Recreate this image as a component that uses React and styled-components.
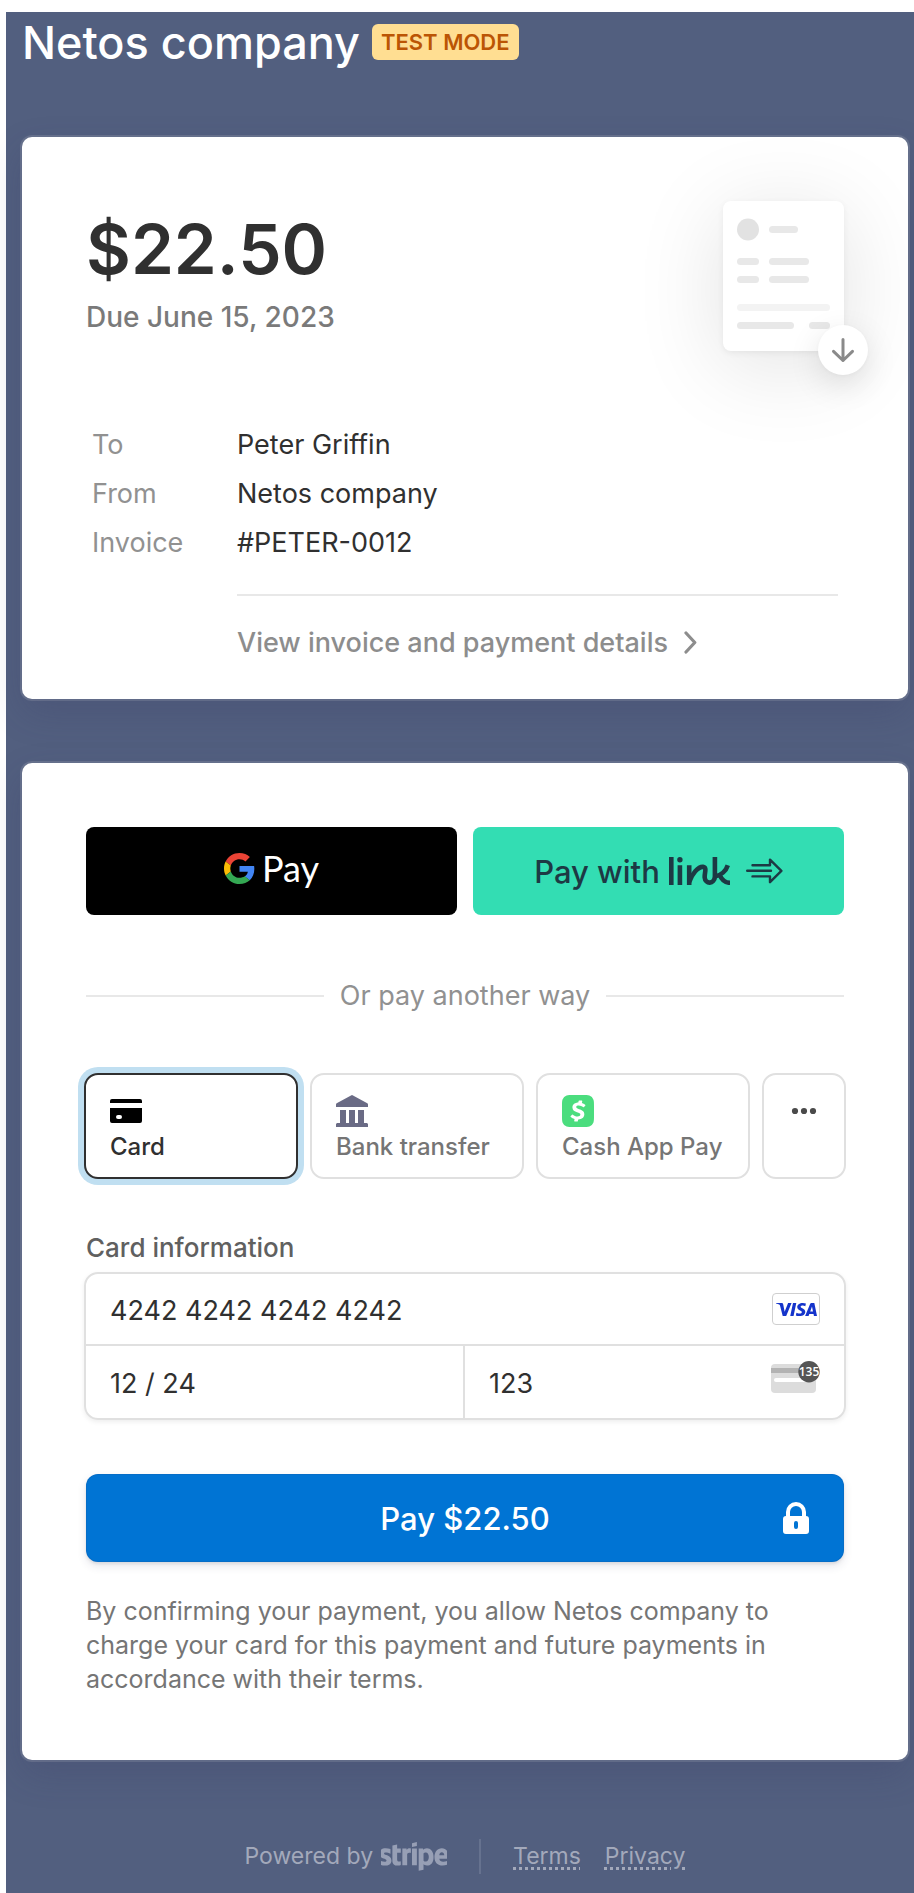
import React, { useState } from "react";
import styled, { createGlobalStyle } from "styled-components";
import { FaStripe } from "react-icons/fa";
import { SiVisa, SiCashapp } from "react-icons/si";

const GlobalStyle = createGlobalStyle`
  *, *::before, *::after { box-sizing: border-box; }
  body {
    margin: 0;
    background: #fff;
    font-family: Inter, "Liberation Sans", sans-serif;
    -webkit-font-smoothing: antialiased;
  }
  button, input { font-family: inherit; }
`;

const Frame = styled.div`
  padding: 12px 0 0 6px;
`;

const Page = styled.main`
  display: flex;
  flex-direction: column;
  min-height: calc(100vh - 12px);
  padding: 4px 6px 18px 16px;
  background: #525f7f;
`;

const Header = styled.header`
  display: flex;
  align-items: flex-start;
  gap: 12px;
  margin-bottom: 67px;
`;

const Company = styled.h1`
  margin: 0;
  color: #fff;
  font-size: 45px;
  line-height: 54px;
  font-weight: 500;
`;

const Badge = styled.span`
  margin-top: 8px;
  padding: 0 9px;
  border-radius: 6px;
  background: #ffde92;
  color: #bb5504;
  font-size: 22px;
  line-height: 36px;
  font-weight: 600;
`;

const Panel = styled.section`
  padding: 64px 64px ${(p) => p.$bottom}px;
  border-radius: 10px;
  background: #fff;
  box-shadow: 0 0 0 2px rgba(224, 224, 224, 0.15), 0 14px 36px rgba(50, 50, 93, 0.2);
  & + & { margin-top: 64px; }
`;

const Summary = styled.div`
  display: flex;
  justify-content: space-between;
  align-items: flex-start;
`;

const Amount = styled.h2`
  margin: 0;
  color: #303030;
  font-size: 69px;
  line-height: 96px;
  font-weight: 600;
`;

const Due = styled.p`
  margin: 0;
  color: #7a7a7a;
  font-size: 28px;
  line-height: 40px;
  font-weight: 500;
`;

const Download = styled.button`
  position: relative;
  display: block;
  width: 121px;
  height: 150px;
  padding: 0;
  border: 0;
  border-radius: 8px;
  background: #fff;
  box-shadow: 0 14px 90px rgba(0, 0, 0, 0.12), 0 2px 6px rgba(0, 0, 0, 0.06);
  cursor: pointer;
  svg { display: block; }
`;

const DownloadBadge = styled.span`
  position: absolute;
  right: -24px;
  bottom: -24px;
  display: flex;
  align-items: center;
  justify-content: center;
  width: 50px;
  height: 50px;
  border-radius: 50%;
  background: #fff;
  box-shadow: 0 10px 32px rgba(0, 0, 0, 0.12), 0 1px 4px rgba(0, 0, 0, 0.03);
`;

const Facts = styled.dl`
  display: grid;
  grid-template-columns: 145px 1fr;
  row-gap: 16px;
  margin: 77px 6px 0;
  font-size: 27px;
  line-height: 33px;
`;

const FactLabel = styled.dt`
  color: #919191;
`;

const FactValue = styled.dd`
  margin: 0;
  color: #303030;
`;

const Details = styled.div`
  margin: 35px 6px 0 151px;
  padding-top: 30px;
  border-top: 2px solid #e8e8e8;
`;

const DetailsLink = styled.a`
  display: flex;
  align-items: center;
  gap: 16px;
  color: #8d8d8d;
  font-size: 27px;
  line-height: 33px;
  font-weight: 500;
  text-decoration: none;
`;

const Wallets = styled.div`
  display: grid;
  grid-template-columns: 1fr 1fr;
  gap: 16px;
`;

const WalletButton = styled.button`
  display: flex;
  align-items: center;
  justify-content: center;
  gap: 9px;
  height: 88px;
  padding: 0;
  border: 0;
  border-radius: 8px;
  background: #33ddb3;
  color: #1d3944;
  font-size: 31px;
  font-weight: 500;
  cursor: pointer;
`;

const GoogleButton = styled(WalletButton)`
  gap: 7px;
  padding-bottom: 6px;
  background: #000;
  color: #fff;
  font-family: Lato, sans-serif;
  font-size: 36px;
  font-weight: 400;
`;

const Divider = styled.div`
  display: flex;
  align-items: center;
  gap: 16px;
  margin: 60px 0 56px;
  color: #919191;
  font-size: 27px;
  line-height: 42px;
  &::before, &::after {
    content: "";
    flex: 1;
    height: 2px;
    background: #e8e8e8;
  }
`;

const Methods = styled.div`
  display: grid;
  grid-template-columns: 1fr 1fr 1fr 84px;
  gap: 12px;
  margin: 0 -2px 52px;
`;

const Method = styled.button`
  display: flex;
  flex-direction: column;
  align-items: ${(p) => (p.$centered ? "center" : "flex-start")};
  gap: 5px;
  height: 106px;
  padding: 20px ${(p) => (p.$centered ? 0 : 24)}px 0;
  border: 2px solid ${(p) => (p.$active ? "#303030" : "#e0e0e0")};
  border-radius: 14px;
  background: #fff;
  box-shadow: ${(p) => (p.$active ? "0 0 0 6px #c0dff1" : "none")};
  color: ${(p) => (p.$active ? "#303030" : "#757575")};
  font-size: 24px;
  line-height: 30px;
  font-weight: 500;
  white-space: nowrap;
  cursor: pointer;
  svg { display: block; flex: none; }
`;

const FieldLabel = styled.label`
  display: block;
  margin-bottom: 7px;
  color: #606060;
  font-size: 26px;
  line-height: 34px;
  font-weight: 500;
`;

const CardFields = styled.div`
  display: grid;
  grid-template-columns: minmax(0, 99fr) minmax(0, 100fr);
  margin: 0 -2px 54px;
  border: 2px solid #e0e0e0;
  border-radius: 14px;
  box-shadow: 0 2px 5px rgba(0, 0, 0, 0.07);
`;

const Field = styled.div`
  display: flex;
  align-items: center;
  height: 72px;
  padding: 0 24px;
  svg { flex: none; }
`;

const NumberField = styled(Field)`
  grid-column: 1 / -1;
  border-bottom: 2px solid #e0e0e0;
`;

const CvcField = styled(Field)`
  border-left: 2px solid #e0e0e0;
`;

const Input = styled.input`
  flex: 1;
  min-width: 0;
  height: 100%;
  padding: 2px 0 0;
  border: 0;
  outline: 0;
  background: transparent;
  color: #303030;
  font-size: 27px;
`;

const VisaBadge = styled.span`
  display: flex;
  align-items: center;
  justify-content: center;
  width: 48px;
  height: 32px;
  border: 1px solid #cfcfcf;
  border-radius: 4px;
  color: #1434cb;
`;

const PayButton = styled.button`
  display: grid;
  grid-template-columns: 26px 1fr 26px;
  align-items: center;
  width: 100%;
  height: 88px;
  padding: 0 35px;
  border: 0;
  border-radius: 12px;
  background: #0074d4;
  box-shadow: inset 0 0 0 1px rgba(50, 50, 93, 0.1), 0 4px 10px rgba(50, 50, 93, 0.12), 0 2px 3px rgba(0, 0, 0, 0.08);
  color: #fff;
  font-size: 31px;
  font-weight: 500;
  cursor: pointer;
  span { grid-column: 2; }
`;

const Terms = styled.p`
  margin: 32px 0 0;
  color: #757575;
  font-size: 25px;
  line-height: 34px;
`;

const Footer = styled.footer`
  display: flex;
  align-items: center;
  justify-content: center;
  gap: 32px;
  margin-top: 78px;
  color: #a3a9bb;
  font-size: 23px;
  line-height: 37px;
`;

const Powered = styled.div`
  display: flex;
  align-items: center;
  gap: 8px;
  svg { display: block; width: 66px; height: 35px; color: #979fb5; }
`;

const FooterRule = styled.span`
  width: 2px;
  height: 35px;
  background: #66728f;
`;

const FooterLinks = styled.nav`
  display: flex;
  gap: 24px;
`;

const FooterLink = styled.a`
  color: inherit;
  text-decoration: underline dotted;
  text-decoration-thickness: 3px;
  text-underline-offset: 3px;
`;

const InvoiceSheet = () => (
  <svg width="121" height="150" viewBox="0 0 121 150" aria-hidden="true">
    <circle cx="25" cy="28.5" r="11" fill="#e2e2e2" />
    <g fill="#e8e8e8">
      <rect x="46" y="25" width="29" height="7" rx="3.5" />
      <rect x="14" y="57" width="22" height="7" rx="3.5" />
      <rect x="46" y="57" width="40" height="7" rx="3.5" />
      <rect x="14" y="75" width="22" height="7" rx="3.5" />
      <rect x="46" y="75" width="40" height="7" rx="3.5" />
      <rect x="14" y="121" width="57" height="7" rx="3.5" />
      <rect x="86" y="121" width="21" height="7" rx="3.5" />
    </g>
    <rect x="14" y="103" width="93" height="7" rx="3.5" fill="#f3f3f3" />
  </svg>
);

const ArrowDown = () => (
  <svg width="24" height="26" viewBox="0 0 24 26" fill="none" stroke="#8a8a8a" strokeWidth="3" strokeLinecap="round" strokeLinejoin="round" aria-hidden="true">
    <path d="M12 2.5V23.5M2.5 14.3L12 23.5L21.5 14.3" />
  </svg>
);

const Chevron = () => (
  <svg width="13" height="23" viewBox="0 0 13 23" fill="none" stroke="currentColor" strokeWidth="3.2" strokeLinecap="round" strokeLinejoin="round" aria-hidden="true">
    <path d="M2 2L10.8 11.5L2 21" />
  </svg>
);

const GoogleMark = () => (
  <svg width="31" height="31" viewBox="0 0 48 48" aria-hidden="true">
    <path fill="#EA4335" d="M24 9.5c3.54 0 6.71 1.22 9.21 3.6l6.85-6.85C35.9 2.38 30.47 0 24 0 14.62 0 6.51 5.38 2.56 13.22l7.98 6.19C12.43 13.72 17.74 9.5 24 9.5z" />
    <path fill="#4285F4" d="M46.98 24.55c0-1.57-.15-3.09-.38-4.55H24v9.02h12.94c-.58 2.96-2.26 5.48-4.78 7.18l7.73 6c4.51-4.18 7.09-10.36 7.09-17.65z" />
    <path fill="#FBBC05" d="M10.53 28.59c-.48-1.45-.76-2.99-.76-4.59s.27-3.14.76-4.59l-7.98-6.19C.92 16.46 0 20.12 0 24c0 3.88.92 7.54 2.56 10.78l7.97-6.19z" />
    <path fill="#34A853" d="M24 48c6.48 0 11.93-2.13 15.89-5.81l-7.73-6c-2.15 1.45-4.92 2.3-8.16 2.3-6.26 0-11.57-4.22-13.47-9.91l-7.98 6.19C6.51 42.62 14.62 48 24 48z" />
  </svg>
);

const LinkLogo = () => (
  <svg width="62" height="28" viewBox="0 0 62 28" fill="none" stroke="currentColor" strokeWidth="4.6" role="img" aria-label="link">
    <path d="M2.3 0V28M10.9 8.3V28M20.2 8.3V28" />
    <circle cx="10.9" cy="2.7" r="2.7" fill="currentColor" stroke="none" />
    <path d="M20.2 25C23 17 29 9.6 34 9.9C38.4 10.4 35.3 16 35.7 20.5C36.2 27.4 45.4 27.6 45.9 19.5V0" />
    <path d="M58.8 8.3C57 14 52 18.4 46 19.4M50.5 17.6C52.6 22.5 55.5 25.8 61 25.8" />
  </svg>
);

const LinkArrow = () => (
  <svg width="43" height="26" viewBox="-6 0 43 26" fill="none" stroke="currentColor" strokeWidth="2.4" strokeLinecap="round" strokeLinejoin="round" aria-hidden="true">
    <path d="M1.2 12.8H25M6.5 7.3H24V1.6L35.4 12.8L24 24.2V18.4H6.5" />
  </svg>
);

const CardIcon = () => (
  <svg width="32" height="32" viewBox="0 0 32 32" aria-hidden="true">
    <path d="M2 4H30A2 2 0 0 1 32 6V8H0V6A2 2 0 0 1 2 4Z" />
    <path fillRule="evenodd" d="M0 13H32V26A2 2 0 0 1 30 28H2A2 2 0 0 1 0 26ZM8 20A2 2 0 0 0 8 24H10A2 2 0 0 0 10 20Z" />
  </svg>
);

const BankIcon = () => (
  <svg width="32" height="32" viewBox="0 0 32 32" fill="#6a6b85" aria-hidden="true">
    <path d="M15 .4Q16-.3 17 .4L31.3 8.3Q32 8.7 32 9.5V12H0V9.5Q0 8.7.7 8.3Z" />
    <path d="M4 15H10V28H13V15H19V28H22V15H28V28H31L32 29V32H0V29L1 28H4Z" />
  </svg>
);

const DotsIcon = () => (
  <svg width="32" height="32" viewBox="0 0 32 32" fill="#4a4a4a" aria-hidden="true">
    <circle cx="7" cy="16" r="3.1" />
    <circle cx="16" cy="16" r="3.1" />
    <circle cx="25" cy="16" r="3.1" />
  </svg>
);

const CvcIcon = () => (
  <svg width="49" height="42" viewBox="0 0 49 42" aria-hidden="true">
    <rect x="0" y="3" width="45" height="29" rx="4" fill="#dcdcdc" />
    <rect x="0" y="7" width="45" height="5" fill="#b3b3b3" />
    <rect x="3" y="17" width="38" height="4" rx="2" fill="#fff" />
    <circle cx="38" cy="10.7" r="10.7" fill="#555" />
    <text x="38" y="15" fill="#fff" fontFamily="Open Sans, sans-serif" fontSize="12" fontWeight="600" textAnchor="middle">135</text>
  </svg>
);

const LockIcon = () => (
  <svg width="26" height="32" viewBox="0 0 26 32" aria-hidden="true">
    <path d="M5 15V10A8 8 0 0 1 21 10V15" fill="none" stroke="#fff" strokeWidth="4" />
    <path fill="#fff" fillRule="evenodd" d="M3 14H23A3 3 0 0 1 26 17V29A3 3 0 0 1 23 32H3A3 3 0 0 1 0 29V17A3 3 0 0 1 3 14ZM13 19A2 2 0 0 0 11 21V25A2 2 0 0 0 15 25V21A2 2 0 0 0 13 19Z" />
  </svg>
);

const facts = [
  ["To", "Peter Griffin"],
  ["From", "Netos company"],
  ["Invoice", "#PETER-0012"],
];

const methods = [
  { id: "card", label: "Card", icon: <CardIcon /> },
  { id: "bank", label: "Bank transfer", icon: <BankIcon /> },
  { id: "cashapp", label: "Cash App Pay", icon: <SiCashapp size={32} color="#4bdd7e" aria-hidden="true" /> },
];

export default function App() {
  const [method, setMethod] = useState("card");

  return (
    <>
      <GlobalStyle />
      <Frame>
        <Page>
          <Header>
            <Company>Netos company</Company>
            <Badge>TEST MODE</Badge>
          </Header>

          <Panel $bottom={40}>
            <Summary>
              <div>
                <Amount>$22.50</Amount>
                <Due>Due June 15, 2023</Due>
              </div>
              <Download type="button" aria-label="Download invoice">
                <InvoiceSheet />
                <DownloadBadge>
                  <ArrowDown />
                </DownloadBadge>
              </Download>
            </Summary>
            <Facts>
              {facts.map(([label, value]) => (
                <React.Fragment key={label}>
                  <FactLabel>{label}</FactLabel>
                  <FactValue>{value}</FactValue>
                </React.Fragment>
              ))}
            </Facts>
            <Details>
              <DetailsLink href="#details">
                View invoice and payment details
                <Chevron />
              </DetailsLink>
            </Details>
          </Panel>

          <Panel $bottom={64}>
            <Wallets>
              <GoogleButton type="button" aria-label="Google Pay">
                <GoogleMark />
                <span>Pay</span>
              </GoogleButton>
              <WalletButton type="button">
                <span>Pay with</span>
                <LinkLogo />
                <LinkArrow />
              </WalletButton>
            </Wallets>

            <Divider>Or pay another way</Divider>

            <Methods>
              {methods.map(({ id, label, icon }) => (
                <Method key={id} type="button" aria-pressed={method === id} $active={method === id} onClick={() => setMethod(id)}>
                  {icon}
                  <span>{label}</span>
                </Method>
              ))}
              <Method type="button" $centered aria-label="More payment methods">
                <DotsIcon />
              </Method>
            </Methods>

            <FieldLabel htmlFor="card-number">Card information</FieldLabel>
            <CardFields>
              <NumberField>
                <Input id="card-number" inputMode="numeric" defaultValue="4242 4242 4242 4242" />
                <VisaBadge>
                  <SiVisa size={41} title="Visa" />
                </VisaBadge>
              </NumberField>
              <Field>
                <Input aria-label="Expiration date" defaultValue="12 / 24" />
              </Field>
              <CvcField>
                <Input aria-label="Security code" defaultValue="123" />
                <CvcIcon />
              </CvcField>
            </CardFields>

            <PayButton type="button">
              <span>Pay $22.50</span>
              <LockIcon />
            </PayButton>

            <Terms>
              By confirming your payment, you allow Netos company to charge your card for this payment and future payments in
              accordance with their terms.
            </Terms>
          </Panel>

          <Footer>
            <Powered>
              Powered by
              <FaStripe viewBox="17 96 606 320" title="Stripe" />
            </Powered>
            <FooterRule />
            <FooterLinks>
              <FooterLink href="#terms">Terms</FooterLink>
              <FooterLink href="#privacy">Privacy</FooterLink>
            </FooterLinks>
          </Footer>
        </Page>
      </Frame>
    </>
  );
}
